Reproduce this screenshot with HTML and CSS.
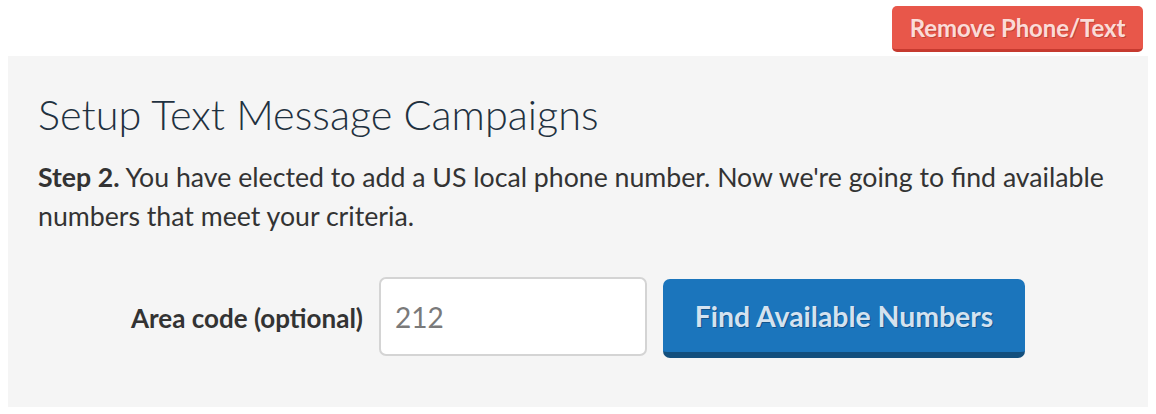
FILE: index.html
```html
<!DOCTYPE html>
<html>
<head>
<meta charset="utf-8">
<link rel="stylesheet" href="styles.css">
</head>
<body>
<div class="topbar">
  <button class="btn btn-red">Remove Phone/Text</button>
</div>
<div class="panel">
  <h1 class="title">Setup Text Message Campaigns</h1>
  <p class="intro"><strong>Step 2.</strong> You have elected to add a US local phone number. Now we're going to find available numbers that meet your criteria.</p>
  <form class="row">
    <label class="label" for="ac">Area code (optional)</label>
    <input class="input" id="ac" type="text" placeholder="212">
    <button type="button" class="btn btn-blue">Find Available Numbers</button>
  </form>
</div>
</body>
</html>
```

FILE: styles.css
```css
html, body {
  background: #ffffff;
}
body {
  margin: 6px 8px 8px;
  font-family: Lato, "Open Sans", sans-serif;
  color: #333333;
}
.topbar {
  display: flex;
  justify-content: flex-end;
  padding-right: 5px;
  margin-bottom: 4px;
}
.btn {
  font-family: Lato, sans-serif;
  font-weight: 700;
  border: none;
  cursor: pointer;
  border-radius: 5px;
}
.btn-red {
  width: 251px;
  height: 46px;
  background: #e8574a;
  border-bottom: 3px solid #c63a2f;
  color: rgba(255, 235, 232, 0.92);
  font-size: 24px;
  letter-spacing: -0.1px;
  text-shadow: 1px 1px 0 rgba(120, 30, 20, 0.35);
  padding: 0;
}
.panel {
  background: #f5f5f5;
  padding: 33px 30px 49px;
}
.title {
  margin: 0;
  font-weight: 300;
  font-size: 41.4px;
  line-height: 50px;
  color: #1f3140;
}
.intro {
  margin: 19px 0 0;
  font-size: 26.7px;
  line-height: 39px;
  color: #333333;
}
.intro strong {
  font-weight: 700;
}
.row {
  margin: 41px 0 0;
  display: flex;
  justify-content: center;
  align-items: flex-start;
}
.label {
  align-self: center;
  font-weight: 700;
  font-size: 26px;
  color: #333333;
  margin-right: 16px;
}
.input {
  box-sizing: border-box;
  width: 268px;
  height: 79px;
  border: 2px solid #d4d4d4;
  border-radius: 7px;
  background: #ffffff;
  font-family: Lato, sans-serif;
  font-size: 28px;
  padding: 0 14px;
  color: #555;
  margin-right: 16px;
}
.input::placeholder {
  color: #7a7a7a;
}
.btn-blue {
  box-sizing: border-box;
  width: 362px;
  height: 79px;
  margin-top: 2px;
  background: #1b75bc;
  border-bottom: 6px solid #134f7d;
  border-radius: 7px;
  color: rgba(225, 236, 246, 0.95);
  font-size: 28.4px;
  text-shadow: 1px 1px 0 rgba(10, 50, 90, 0.5);
  padding: 0;
}
```
